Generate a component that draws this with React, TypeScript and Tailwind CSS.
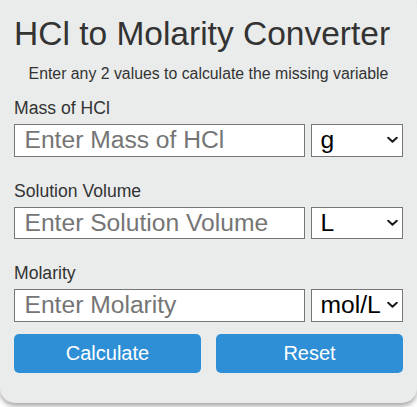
import React from "react";

const font = { fontFamily: '"Liberation Sans", Arial, sans-serif' };

function Chevron() {
  return (
    <svg
      className="pointer-events-none absolute right-[5px] top-1/2 -translate-y-1/2"
      width="11"
      height="7"
      viewBox="0 0 11 7"
      fill="none"
    >
      <path d="M1.2 1.2 L5.5 5.2 L9.8 1.2" stroke="#1a1a1a" strokeWidth="2" strokeLinecap="round" strokeLinejoin="round" />
    </svg>
  );
}

function Field({
  label,
  placeholder,
  options,
  first,
}: {
  label: string;
  placeholder: string;
  options: string[];
  first?: boolean;
}) {
  return (
    <div className={first ? "mt-[15px]" : "mt-[24px]"}>
      <label className="block text-[17.6px] leading-[20px] text-[#333]">{label}</label>
      <div className="mt-[6px] flex gap-[5.5px]">
        <input
          type="text"
          placeholder={placeholder}
          className="h-[32.5px] w-[291px] border border-[#767676] bg-white pl-[9.5px] text-[24.64px] leading-[28px] text-black placeholder:text-[#757575] outline-none"
        />
        <div className="relative flex-1">
          <select className="h-[32.5px] w-full appearance-none border border-[#767676] bg-white pl-[9px] text-[24.64px] leading-[28px] text-black outline-none">
            {options.map((o) => (
              <option key={o}>{o}</option>
            ))}
          </select>
          <Chevron />
        </div>
      </div>
    </div>
  );
}

export default function App() {
  return (
    <div className="h-[407px] w-[417px] overflow-hidden bg-white" style={font}>
      <div className="mt-[-10px] w-[417px] rounded-[15px] bg-[#eaeceb] px-[14px] pb-[30px] pt-[25px] shadow-[0_3px_5px_rgba(0,0,0,0.35)]">
        <h1 className="text-[33.5px] font-normal leading-[38.5px] text-[#333]">HCl to Molarity Converter</h1>
        <p className="mt-[11.5px] text-center text-[15.84px] leading-[18px] text-[#333]">
          Enter any 2 values to calculate the missing variable
        </p>
        <Field first label="Mass of HCl" placeholder="Enter Mass of HCl" options={["g", "kg", "mg"]} />
        <Field label="Solution Volume" placeholder="Enter Solution Volume" options={["L", "mL"]} />
        <Field label="Molarity" placeholder="Enter Molarity" options={["mol/L", "mmol/L"]} />
        <div className="mt-[12px] flex gap-[15px]">
          <button className="h-[39px] flex-1 rounded-[5px] bg-[#2e8fd7] text-[20px] text-white">Calculate</button>
          <button className="h-[39px] flex-1 rounded-[5px] bg-[#2e8fd7] text-[20px] text-white">Reset</button>
        </div>
      </div>
    </div>
  );
}
